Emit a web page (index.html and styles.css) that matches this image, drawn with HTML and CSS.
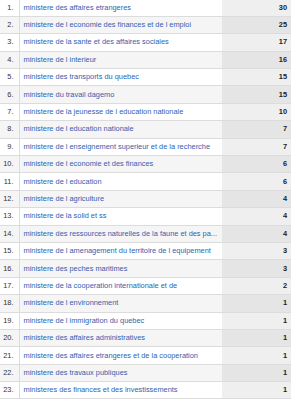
FILE: index.html
```html
<!DOCTYPE html>
<html>
<head>
<meta charset="utf-8">
<link rel="stylesheet" href="styles.css">
</head>
<body>
<table class="report">
<colgroup><col class="c-rank"><col class="c-name"><col class="c-val"></colgroup>
<tbody>
<tr><td class="rank">1.</td><td class="name"><a>ministere des affaires etrangeres</a></td><td class="val">30</td></tr>
<tr><td class="rank">2.</td><td class="name"><a>ministere de l economie des finances et de l emploi</a></td><td class="val">25</td></tr>
<tr><td class="rank">3.</td><td class="name"><a>ministere de la sante et des affaires sociales</a></td><td class="val">17</td></tr>
<tr><td class="rank">4.</td><td class="name"><a>ministere de l interieur</a></td><td class="val">16</td></tr>
<tr><td class="rank">5.</td><td class="name"><a>ministere des transports du quebec</a></td><td class="val">15</td></tr>
<tr><td class="rank">6.</td><td class="name"><a>ministere du travail dagemo</a></td><td class="val">15</td></tr>
<tr><td class="rank">7.</td><td class="name"><a>ministere de la jeunesse de l education nationale</a></td><td class="val">10</td></tr>
<tr><td class="rank">8.</td><td class="name"><a>ministere de l education nationale</a></td><td class="val">7</td></tr>
<tr><td class="rank">9.</td><td class="name"><a>ministere de l enseignement superieur et de la recherche</a></td><td class="val">7</td></tr>
<tr><td class="rank">10.</td><td class="name"><a>ministere de l economie et des finances</a></td><td class="val">6</td></tr>
<tr><td class="rank">11.</td><td class="name"><a>ministere de l education</a></td><td class="val">6</td></tr>
<tr><td class="rank">12.</td><td class="name"><a>ministere de l agriculture</a></td><td class="val">4</td></tr>
<tr><td class="rank">13.</td><td class="name"><a>ministere de la solid et ss</a></td><td class="val">4</td></tr>
<tr><td class="rank">14.</td><td class="name"><a>ministere des ressources naturelles de la faune et des pa...</a></td><td class="val">4</td></tr>
<tr><td class="rank">15.</td><td class="name"><a>ministere de l amenagement du territoire de l equipement</a></td><td class="val">3</td></tr>
<tr><td class="rank">16.</td><td class="name"><a>ministere des peches maritimes</a></td><td class="val">3</td></tr>
<tr><td class="rank">17.</td><td class="name"><a>ministere de la cooperation internationale et de</a></td><td class="val">2</td></tr>
<tr><td class="rank">18.</td><td class="name"><a>ministere de l environnement</a></td><td class="val">1</td></tr>
<tr><td class="rank">19.</td><td class="name"><a>ministere de l immigration du quebec</a></td><td class="val">1</td></tr>
<tr><td class="rank">20.</td><td class="name"><a>ministere des affaires administratives</a></td><td class="val">1</td></tr>
<tr><td class="rank">21.</td><td class="name"><a>ministere des affaires etrangeres et de la cooperation</a></td><td class="val">1</td></tr>
<tr><td class="rank">22.</td><td class="name"><a>ministere des travaux publiques</a></td><td class="val">1</td></tr>
<tr><td class="rank">23.</td><td class="name"><a>ministeres des finances et des investissements</a></td><td class="val">1</td></tr>
</tbody>
</table>
</body>
</html>
```
FILE: styles.css
```css
html, body {
  margin: 0;
  padding: 0;
  background: #ffffff;
}
.report {
  width: 291px;
  table-layout: fixed;
  border-collapse: collapse;
  margin-top: -0.5px;
  font-family: "Liberation Sans", Arial, sans-serif;
  font-size: 7.4px;
}
.c-rank { width: 19px; }
.c-name { width: 203px; }
.c-val { width: 69px; }
.report td {
  height: 16.4px;
  padding: 0;
  border-bottom: 1px solid #dcdcdc;
  white-space: nowrap;
  overflow: hidden;
  line-height: 10px;
}
.report tr:nth-child(even) td {
  background: #f5f5f5;
}
.report td.rank {
  text-align: right;
  padding-right: 5px;
  color: #333333;
  border-right: 1px solid #dcdcdc;
}
.report td.name {
  padding-left: 4px;
  color: #2f62b0;
}
.name a {
  color: #2f62b0;
}
.report td.val {
  text-align: right;
  padding-right: 4px;
  font-weight: bold;
  color: #222222;
  background: #efefef;
}
.report tr:nth-child(even) td.val {
  background: #e5e5e5;
}
```
